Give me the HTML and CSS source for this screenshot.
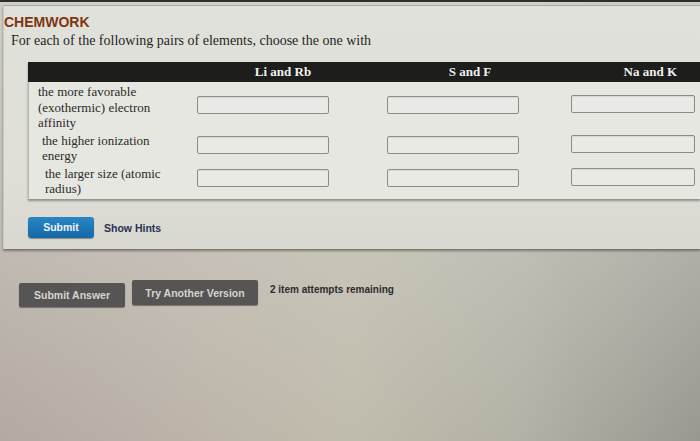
FILE: index.html
```html
<!DOCTYPE html>
<html>
<head>
<meta charset="utf-8">
<link rel="stylesheet" href="styles.css">
</head>
<body>
<div class="topbar"></div>
<div class="panel">
  <div class="brand">CHEMWORK</div>
  <p class="prompt">For each of the following pairs of elements, choose the one with</p>
  <div class="table">
    <div class="thead">
      <div class="th label-col"></div>
      <div class="th">Li and Rb</div>
      <div class="th">S and F</div>
      <div class="th th-last">Na and K</div>
    </div>
    <div class="tbody">
      <div class="row">
        <div class="label l1">the more favorable (exothermic) electron affinity</div>
        <div class="cell"><span class="input"></span></div>
        <div class="cell"><span class="input"></span></div>
        <div class="cell"><span class="input last"></span></div>
      </div>
      <div class="row">
        <div class="label l2">the higher ionization energy</div>
        <div class="cell"><span class="input"></span></div>
        <div class="cell"><span class="input"></span></div>
        <div class="cell"><span class="input last"></span></div>
      </div>
      <div class="row">
        <div class="label l3">the larger size (atomic radius)</div>
        <div class="cell"><span class="input"></span></div>
        <div class="cell"><span class="input"></span></div>
        <div class="cell"><span class="input last"></span></div>
      </div>
    </div>
  </div>
  <div class="actions">
    <button class="btn-submit">Submit</button>
    <span class="hints">Show Hints</span>
  </div>
</div>
<div class="footer">
  <button class="btn-dark btn-answer">Submit Answer</button>
  <button class="btn-dark btn-try">Try Another Version</button>
  <span class="attempts">2 item attempts remaining</span>
</div>
</body>
</html>
```

FILE: styles.css
```css
html, body {
  margin: 0;
  padding: 0;
}
body {
  width: 700px;
  height: 441px;
  overflow: hidden;
  background:
    linear-gradient(180deg, rgba(214, 212, 204, 0.85) 0%, rgba(214, 212, 204, 0.35) 60%, rgba(214, 212, 204, 0) 100%),
    linear-gradient(90deg, #b3aaa2 0%, #bdb5aa 30%, #c0bcad 50%, #b3b1a5 75%, #999790 100%);
  font-family: "Liberation Serif", serif;
}
.topbar {
  height: 2px;
  background: #2e2e2e;
}
.panel {
  margin: 3px 0 0 3px;
  width: 697px;
  height: 244px;
  background: linear-gradient(180deg, #e0e1da 0%, #dfdfd8 70%, #d8d7d0 100%);
  border-top: 1px solid #a9aaa5;
  border-left: 1px solid #c9c9c2;
  box-shadow: 0 2px 2px rgba(60, 60, 55, 0.55);
  display: flex;
  flex-direction: column;
  box-sizing: border-box;
}
.brand {
  font-family: "Liberation Sans", sans-serif;
  font-weight: bold;
  font-size: 14px;
  color: #7e3512;
  margin: 8px 0 0 0;
  line-height: 16px;
}
.prompt {
  margin: 2px 0 0 7px;
  font-size: 14px;
  line-height: 17px;
  color: #1f1f1f;
}
.table {
  margin: 13px 0 0 24px;
  width: 672px;
  box-shadow: 0 2px 2px rgba(70, 70, 65, 0.5);
}
.thead {
  display: grid;
  grid-template-columns: 160px 190px 184px 138px;
  height: 20px;
  background: #1d1d1c;
  align-items: center;
}
.th {
  text-align: center;
  color: #f0f0ee;
  font-weight: bold;
  font-size: 13px;
  line-height: 20px;
}
.th-last {
  text-align: right;
  padding-right: 23px;
}
.tbody {
  background: #e7e7e2;
  border-left: 1px solid #b9b9b3;
  padding: 2px 0 2px 0;
}
.row {
  display: grid;
  grid-template-columns: 160px 190px 184px 138px;
  align-items: center;
}
.label {
  font-size: 13px;
  line-height: 15.5px;
  color: #2a2a2a;
  padding-right: 28px;
}
.l1 { padding-left: 9px; }
.l2 { padding-left: 13px; margin-top: 2px; }
.l3 { padding-left: 16px; margin-top: 2px; }
.cell {
  display: flex;
  align-items: center;
  padding-left: 8px;
}
.input {
  display: block;
  width: 130px;
  height: 16px;
  border: 1px solid #8c8c88;
  border-radius: 2px;
  background: #e9e9e5;
  box-shadow: inset 0 1px 1px rgba(0,0,0,0.08);
  margin-bottom: 4px;
}
.input.last {
  width: 122px;
  margin-bottom: 7px;
}
.actions {
  display: flex;
  align-items: center;
  gap: 10px;
  margin: 18px 0 0 24px;
}
.btn-submit {
  width: 66px;
  height: 21px;
  border: none;
  border-radius: 3px;
  background: linear-gradient(180deg, #2a86c4 0%, #1468a6 100%);
  color: #eef4fa;
  font-family: "Liberation Sans", sans-serif;
  font-weight: bold;
  font-size: 10.5px;
  padding: 0;
  box-shadow: 0 1px 1px rgba(0,0,0,0.35);
}
.hints {
  font-family: "Liberation Sans", sans-serif;
  font-weight: bold;
  font-size: 10.5px;
  color: #27324f;
  margin-top: 2px;
}
.footer {
  display: flex;
  align-items: flex-start;
  margin: 31px 0 0 19px;
  gap: 7px;
}
.btn-dark {
  border: none;
  border-radius: 2px;
  background: #575553;
  color: #d6d4d0;
  font-family: "Liberation Sans", sans-serif;
  font-weight: bold;
  font-size: 10.5px;
  padding: 0;
  box-shadow: 0 1px 1px rgba(0,0,0,0.4);
}
.btn-answer {
  width: 106px;
  height: 24px;
  margin-top: 3px;
}
.btn-try {
  width: 126px;
  height: 25px;
}
.attempts {
  font-family: "Liberation Sans", sans-serif;
  font-weight: bold;
  font-size: 10px;
  color: #2d2d2d;
  margin: 4px 0 0 5px;
}
```
